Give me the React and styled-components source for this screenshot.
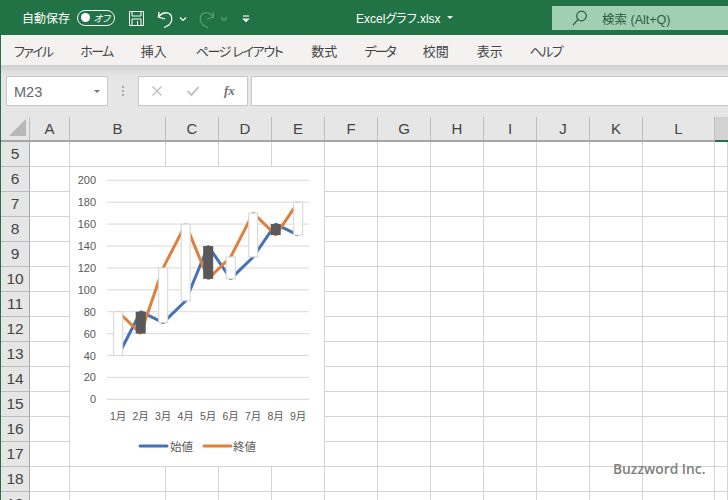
import React from "react";
import styled, { createGlobalStyle } from "styled-components";

const Global = createGlobalStyle`
  html, body { margin: 0; padding: 0; background: #fff; }
  * { box-sizing: border-box; }
`;

const UI = `"Liberation Sans", "Noto Sans CJK JP", sans-serif`;

const Page = styled.div`
  width: 728px;
  height: 500px;
  overflow: hidden;
  display: flex;
  flex-direction: column;
  font-family: ${UI};
  font-feature-settings: "palt";
  background: #e6e6e6;
  border-left: 1px solid #217346;
  position: relative;
`;

const TitleBar = styled.div`
  height: 35px;
  margin-left: -1px;
  flex: none;
  background: #217346;
  color: #fff;
  display: flex;
  align-items: center;
  position: relative;
`;
const AutoSave = styled.span`
  margin-left: 22px;
  font-size: 12px;
  width: 55px;
`;
const Toggle = styled.div`
  width: 38px;
  height: 16px;
  border: 1px solid #fff;
  border-radius: 8px;
  display: flex;
  align-items: center;
  padding: 0 4px 0 3px;
  font-size: 9.5px;
  font-style: italic;
  justify-content: space-between;
  margin-right: 13px;
`;
const Knob = styled.i`
  width: 9px;
  height: 9px;
  border-radius: 50%;
  background: #fff;
`;
const QuickIcon = styled.svg`
  flex: none;
  margin-right: ${(p) => p.$gap || 0}px;
  margin-top: ${(p) => p.$top || 0}px;
  fill: none;
  stroke: ${(p) => p.$color || "#fff"};
`;
const FileName = styled.div`
  position: absolute;
  left: 356px;
  top: 0;
  height: 35px;
  display: flex;
  align-items: center;
  gap: 6px;
  font-size: 12px;
  white-space: nowrap;
`;
const Caret = styled.i`
  width: 0;
  height: 0;
  border-left: 3px solid transparent;
  border-right: 3px solid transparent;
  border-top: 3px solid ${(p) => p.$color || "#fff"};
`;
const SearchBox = styled.div`
  position: absolute;
  left: 552px;
  top: 6px;
  width: 176px;
  height: 24px;
  background: #a0cfb1;
  color: #2f5c42;
  display: flex;
  align-items: center;
  padding-left: 20px;
  gap: 14px;
  font-size: 12.5px;
`;

const Tabs = styled.div`
  height: 30px;
  flex: none;
  background: #f3f2f1;
  display: flex;
  align-items: center;
  padding-left: 13px;
  color: #444;
  font-size: 13px;
  white-space: nowrap;
`;
const Tab = styled.span`
  margin-right: ${(p) => p.$gap}px;
  letter-spacing: ${(p) => p.$track || 0}px;
`;
const Shade = styled.div`
  height: 11px;
  flex: none;
  background: linear-gradient(#d0d0d0, #e6e6e6);
`;
const FormulaBar = styled.div`
  height: 30px;
  flex: none;
  display: flex;
  align-items: stretch;
  padding-left: 5px;
`;
const NameBox = styled.div`
  width: 102px;
  background: #fff;
  border: 1px solid #c8c8c8;
  color: #666;
  font-size: 14.5px;
  display: flex;
  align-items: center;
  justify-content: space-between;
  padding: 1px 7px 0 7px;
`;
const Dots = styled.div`
  width: 30px;
  display: flex;
  flex-direction: column;
  align-items: center;
  justify-content: center;
  gap: 2px;
  & i {
    width: 2px;
    height: 2px;
    background: #aaa;
  }
`;
const FxButtons = styled.div`
  width: 110px;
  background: #fff;
  border: 1px solid #c8c8c8;
  display: flex;
  align-items: center;
  padding-left: 12px;
  gap: 23px;
`;
const FxLabel = styled.span`
  font-family: "Liberation Serif", serif;
  font-style: italic;
  font-weight: bold;
  font-size: 13px;
  color: #707070;
  margin-left: 1px;
`;
const FormulaInput = styled.div`
  flex: 1;
  margin-left: 3px;
  background: #fff;
  border: 1px solid #c8c8c8;
  border-right: 0;
`;

const Sheet = styled.div`
  margin-top: 11px;
  flex: 1;
  display: flex;
  flex-direction: column;
  position: relative;
`;
const HeaderRow = styled.div`
  height: 25px;
  flex: none;
  display: flex;
  border-bottom: 2px solid #a6a6a6;
`;
const Corner = styled.div`
  width: 29px;
  flex: none;
  border-right: 1px solid #bdbdbd;
  display: flex;
  align-items: flex-end;
  justify-content: flex-end;
  padding: 0 3px 4px 0;
`;
const ColHead = styled.div`
  flex: ${(p) => (p.$w ? `0 0 ${p.$w}px` : "1")};
  display: flex;
  align-items: center;
  justify-content: center;
  font-size: 15px;
  color: #444;
  border-right: 1px solid #bdbdbd;
  background: ${(p) => (p.$active ? "#d2d2d2" : "transparent")};
  ${(p) => p.$active && "border-bottom: 2px solid #217346; margin-bottom: -2px; border-right: 0;"}
`;
const Row = styled.div`
  height: 25px;
  flex: none;
  display: flex;
`;
const RowHead = styled.div`
  width: 29px;
  flex: none;
  background: #e6e6e6;
  border-right: 1px solid #a6a6a6;
  border-bottom: 1px solid #bdbdbd;
  display: flex;
  align-items: center;
  justify-content: center;
  font-size: 15.5px;
  color: #444;
`;
const Cell = styled.div`
  flex: ${(p) => (p.$w ? `0 0 ${p.$w}px` : "1")};
  background: #fff;
  border-right: 1px solid #d4d4d4;
  border-bottom: 1px solid #d4d4d4;
`;
const ChartBox = styled.div`
  position: absolute;
  left: 69px;
  top: 50px;
  width: 254px;
  height: 299px;
  background: #fff;
  overflow: hidden;
`;
const Watermark = styled.div`
  position: absolute;
  left: 612px;
  top: 459px;
  font-family: "Open Sans", sans-serif;
  font-weight: 600;
  font-size: 13.8px;
  color: #808080;
  white-space: nowrap;
`;
const AxisText = styled.text`
  font-family: ${UI};
  font-size: ${(p) => p.$size || 11}px;
  fill: #595959;
`;

const columns = [
  ["A", 40], ["B", 96], ["C", 53], ["D", 53], ["E", 53], ["F", 53], ["G", 53],
  ["H", 53], ["I", 53], ["J", 53], ["K", 53], ["L", 72], ["", 0],
];
const rows = [5, 6, 7, 8, 9, 10, 11, 12, 13, 14, 15, 16, 17, 18, 19];
const tabs = [
  ["ファイル", 28, -1.7], ["ホーム", 28, -1.6], ["挿入", 29, 0], ["ページ レイアウト", 29, -1.35],
  ["数式", 27, 0], ["データ", 28, -2], ["校閲", 28, 0], ["表示", 27, 0], ["ヘルプ", 0, -1.6],
];

const open = [40, 80, 70, 90, 140, 110, 130, 160, 150];
const close = [80, 60, 120, 160, 110, 130, 170, 150, 180];
const X0 = 37; // plot left, chart coordinates
const Y0 = 232.3; // value 0
const cx = (i) => X0 + 11.2 + i * 22.5;
const vy = (v) => Y0 - v * 1.095;
const line = (arr) => arr.map((v, i) => `${cx(i)},${vy(v)}`).join(" ");

function Chart() {
  return (
    <ChartBox>
      <svg width="254" height="299" viewBox="0 0 254 299">
        {[0, 20, 40, 60, 80, 100, 120, 140, 160, 180, 200].map((v) => (
          <g key={v}>
            <line x1={X0} x2={X0 + 202} y1={vy(v)} y2={vy(v)} stroke="#d9d9d9" />
            <AxisText x={26} y={vy(v) + 4} textAnchor="end">{v}</AxisText>
          </g>
        ))}
        <polyline points={line(open)} fill="none" stroke="#4472b4" strokeWidth="3" strokeLinejoin="bevel" />
        <polyline points={line(close)} fill="none" stroke="#df7f3c" strokeWidth="3" strokeLinejoin="bevel" />
        {open.map((o, i) => {
          const up = close[i] > o;
          const top = vy(Math.max(o, close[i]));
          const h = vy(Math.min(o, close[i])) - top;
          return up ? (
            <rect key={i} x={cx(i) - 4.5} y={top} width={9} height={h} fill="#fff" stroke="#d4d4d4" strokeWidth="1" />
          ) : (
            <rect key={i} x={cx(i) - 5} y={top} width={10} height={h} fill="#595959" />
          );
        })}
        {open.map((_, i) => (
          <AxisText key={i} x={cx(i)} y={253} textAnchor="middle" $size={10.5}>{`${i + 1}月`}</AxisText>
        ))}
        <line x1={70} x2={97} y1={279} y2={279} stroke="#4472b4" strokeWidth="3" strokeLinecap="round" />
        <AxisText x={100} y={283.5} $size={11.5}>始値</AxisText>
        <line x1={134} x2={161} y1={279} y2={279} stroke="#df7f3c" strokeWidth="3" strokeLinecap="round" />
        <AxisText x={163} y={283.5} $size={11.5}>終値</AxisText>
      </svg>
    </ChartBox>
  );
}

export default function App() {
  return (
    <Page>
      <Global />
      <TitleBar>
        <AutoSave>自動保存</AutoSave>
        <Toggle>
          <Knob />
          <span>オフ</span>
        </Toggle>
        <QuickIcon width="17" height="17" viewBox="0 0 17 17" strokeWidth="1" $gap={12} $top={2}>
          <path d="M1.500 1.500h14v14h-14z" />
          <path d="M4 1.500v4.500h9v-4.500M4 15.500v-6.500h9v6.500M9.500 11v4.500" />
        </QuickIcon>
        <QuickIcon width="17" height="19" viewBox="0 0 17 19" strokeWidth="1.300" $gap={5} $top={3}>
          <path d="M2 2L1.500 7L8 9M1.500 7C4 4 7 2.500 10 2.800C13.500 3.200 15 6 14.700 10C14.500 13.500 11 16 7 17.500" />
        </QuickIcon>
        <QuickIcon width="8" height="6" viewBox="0 0 8 6" strokeWidth="1.200" $gap={11} $top={2}>
          <path d="M1 1.500l3 3 3-3" />
        </QuickIcon>
        <QuickIcon width="17" height="19" viewBox="0 0 17 19" strokeWidth="1.200" $color="#5f9d7a" $gap={5} $top={3}>
          <path d="M15 2L15.500 7L9 9M15.500 7C13 4 10 2.500 7 2.800C3.500 3.200 2 6 2.300 10C2.500 13.500 6 16 10 17.500" />
        </QuickIcon>
        <QuickIcon width="8" height="6" viewBox="0 0 8 6" strokeWidth="1.100" $color="#5f9d7a" $gap={14} $top={2}>
          <path d="M1 1.500l3 3 3-3" />
        </QuickIcon>
        <QuickIcon width="8" height="8" viewBox="0 0 8 8" strokeWidth="1.100" $top={2}>
          <path d="M1 1h6" />
          <path d="M1.500 4l2.500 2.500L6.500 4z" fill="#fff" />
        </QuickIcon>
        <FileName>
          <span>Excelグラフ.xlsx</span>
          <Caret />
        </FileName>
        <SearchBox>
          <QuickIcon width="16" height="16" viewBox="0 0 16 16" strokeWidth="1.200" $color="#2f5c42">
            <circle cx="9.500" cy="6" r="4.800" />
            <path d="M6 9.500L1 15" />
          </QuickIcon>
          <span>検索 (Alt+Q)</span>
        </SearchBox>
      </TitleBar>
      <Tabs>
        {tabs.map(([t, gap, track]) => (
          <Tab key={t} $gap={gap} $track={track}>{t}</Tab>
        ))}
      </Tabs>
      <Shade />
      <FormulaBar>
        <NameBox>
          <span>M23</span>
          <Caret $color="#777" />
        </NameBox>
        <Dots>
          <i />
          <i />
          <i />
        </Dots>
        <FxButtons>
          <QuickIcon width="12" height="12" viewBox="0 0 12 12" strokeWidth="1.600" $color="#c4c4c4">
            <path d="M1.500 1.500l9 9M10.500 1.500l-9 9" />
          </QuickIcon>
          <QuickIcon width="14" height="12" viewBox="0 0 14 12" strokeWidth="2" $color="#c4c4c4">
            <path d="M1.500 6l4 4 7-8" />
          </QuickIcon>
          <FxLabel>fx</FxLabel>
        </FxButtons>
        <FormulaInput />
      </FormulaBar>
      <Sheet>
        <HeaderRow>
          <Corner>
            <svg width="17" height="17" viewBox="0 0 17 17">
              <path d="M17 0v17H0z" fill="#b8b8b8" />
            </svg>
          </Corner>
          {columns.map(([c, w]) => (
            <ColHead key={c || "M"} $w={w} $active={!c}>{c}</ColHead>
          ))}
        </HeaderRow>
        {rows.map((r) => (
          <Row key={r}>
            <RowHead>{r}</RowHead>
            {columns.map(([c, w]) => (
              <Cell key={c || "M"} $w={w} />
            ))}
          </Row>
        ))}
        <Chart />
      </Sheet>
      <Watermark>Buzzword Inc.</Watermark>
    </Page>
  );
}
